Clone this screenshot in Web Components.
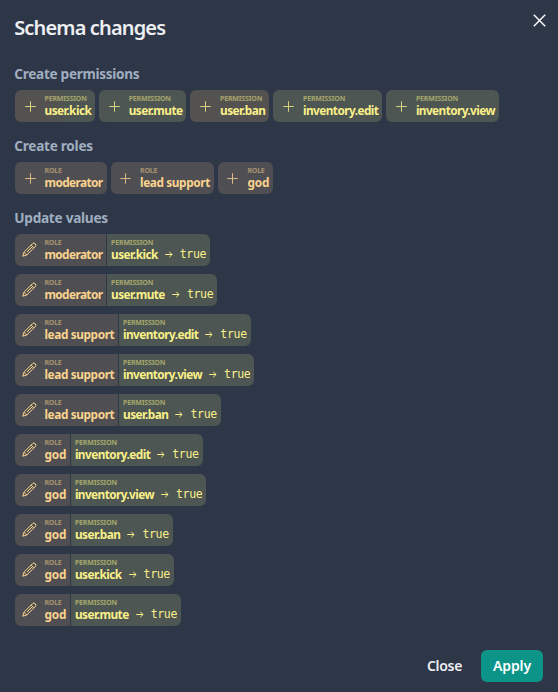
<!DOCTYPE html>
<html lang="en">
<head>
<meta charset="utf-8">
<title>Schema changes</title>
<style>
  body { margin: 0; background: #2d3748; font-family: "Noto Sans", "Open Sans", sans-serif; }
</style>
</head>
<body>
<schema-dialog></schema-dialog>
<script>
// Text whose letters are spaced so that it fills the given width.
class FitText extends HTMLElement {
  constructor() {
    super();
    this.attachShadow({ mode: 'open' }).innerHTML = `
      <style>:host{display:block;white-space:nowrap}span{display:inline-block}</style><span></span>`;
  }
  connectedCallback() {
    const s = this.shadowRoot.querySelector('span');
    const text = this.getAttribute('text');
    const width = +this.getAttribute('width');
    s.textContent = text;
    this.style.width = width + 'px';
    const natural = s.getBoundingClientRect().width;
    s.style.letterSpacing = (width - natural) / text.length + 'px';
  }
}
customElements.define('fit-text', FitText);

class UiIcon extends HTMLElement {
  connectedCallback() {
    const icons = {
      plus: '<path d="M7.5 2.2v10.6M2.2 7.5h10.6"/>',
      pencil: '<path d="M.8 14.2 2 10.2 10.6 1.6Q11.9.4 13.2 1.7Q14.6 3.1 13.4 4.4L4.8 13ZM2 10.2 4.8 13M9.1 3.1 11.9 5.9M10.5 4.5 5 10"/>',
      arrow: '<path d="M3.3 7.5h6.7M7.3 4.8 10 7.5 7.3 10.2"/>',
      cross: '<path stroke-width="1.4" d="M1.8 1.8 13.2 13.2M13.2 1.8 1.8 13.2"/>'
    };
    this.attachShadow({ mode: 'open' }).innerHTML = `
      <style>:host{display:block;width:15px;height:15px;flex:none}svg{display:block}</style>
      <svg width="15" height="15" viewBox="0 0 15 15" fill="none" stroke="currentColor" stroke-width="1" stroke-linejoin="round">${icons[this.getAttribute('name')]}</svg>`;
  }
}
customElements.define('ui-icon', UiIcon);

const WIDTHS = {
  'user.kick': 46.7, 'user.mute': 53.8, 'user.ban': 45.5, 'inventory.edit': 75.4,
  'inventory.view': 79.1, 'moderator': 58, 'lead support': 69.9, 'god': 21.8
};

// Small caption above a bold name, tinted by kind (role or permission).
class NameLabel extends HTMLElement {
  connectedCallback() {
    const kind = this.getAttribute('kind'), name = this.getAttribute('name');
    this.attachShadow({ mode: 'open' }).innerHTML = `
      <style>
        :host{display:block;height:32px}
        .kind{font-size:7px;font-weight:700;line-height:9px;padding-top:4px;opacity:.5}
        .name{font-size:11.8px;font-weight:700;line-height:14.5px}
      </style>
      <fit-text class="kind" text="${kind.toUpperCase()}" width="${kind === 'role' ? 17.2 : 42.2}"></fit-text>
      <fit-text class="name" text="${name}" width="${WIDTHS[name]}"></fit-text>`;
  }
}
customElements.define('name-label', NameLabel);

class CreateChip extends HTMLElement {
  connectedCallback() {
    const kind = this.getAttribute('kind');
    this.attachShadow({ mode: 'open' }).innerHTML = `
      <style>
        :host{display:flex;box-sizing:border-box;height:32px;border-radius:6px;padding:0 4px 0 7.5px;gap:7px;
          color:${kind === 'role' ? '#fbd38d' : '#faf089'};background:var(--chip, ${kind === 'role' ? '#4f4f53' : '#4d5652'})}
        ui-icon{margin-top:8.5px;opacity:.8}
      </style>
      <ui-icon name="plus"></ui-icon><name-label kind="${kind}" name="${this.getAttribute('name')}"></name-label>`;
  }
}
customElements.define('create-chip', CreateChip);

class UpdateRow extends HTMLElement {
  connectedCallback() {
    this.attachShadow({ mode: 'open' }).innerHTML = `
      <style>
        :host{display:flex;gap:1px;width:max-content;height:32px;border-radius:6px;overflow:hidden}
        div{display:flex;padding-right:4px}
        .role{background:#4f4f53;color:#fbd38d;padding:0 3.7px 0 7.4px;gap:7px}
        .role ui-icon{margin-top:8px}
        .perm{background:#4d5652;color:#faf089;padding-left:4px}
        .perm ui-icon{margin:13px 3px 0 4px}
        .value{font:11.5px/16px "DejaVu Sans Mono",monospace;margin-top:12px}
      </style>
      <div class="role"><ui-icon name="pencil"></ui-icon><name-label kind="role" name="${this.getAttribute('role-name')}"></name-label></div>
      <div class="perm"><name-label kind="permission" name="${this.getAttribute('permission')}"></name-label>
        <ui-icon name="arrow"></ui-icon><fit-text class="value" text="true" width="26.4"></fit-text></div>`;
  }
}
customElements.define('update-row', UpdateRow);

class ChangeSection extends HTMLElement {
  connectedCallback() {
    this.attachShadow({ mode: 'open' }).innerHTML = `
      <style>
        :host{display:block;margin-bottom:12px}
        h2{margin:0 0 4px -.7px;height:24px;line-height:24px;font-size:13.6px;font-weight:700;color:#a0aec0;display:flex;align-items:center}
        .items{display:flex;gap:4px}
        :host([stacked]) .items{flex-direction:column;gap:8px}
      </style>
      <h2><fit-text text="${this.getAttribute('heading')}" width="${this.getAttribute('heading-width')}"></fit-text></h2>
      <div class="items"><slot></slot></div>`;
  }
}
customElements.define('change-section', ChangeSection);

class UiButton extends HTMLElement {
  connectedCallback() {
    this.attachShadow({ mode: 'open' }).innerHTML = `
      <style>
        :host{display:flex}
        button{all:unset;box-sizing:border-box;height:32px;padding:0 12px;border-radius:6px;font-size:14px;font-weight:600;line-height:32px;color:#edeff2}
        :host([primary]) button{background:#0d9488;color:#fff}
      </style>
      <button><fit-text text="${this.getAttribute('label')}" width="${this.getAttribute('text-width')}"></fit-text></button>`;
  }
}
customElements.define('ui-button', UiButton);

class SchemaDialog extends HTMLElement {
  connectedCallback() {
    const perms = ['user.kick', 'user.mute', 'user.ban', 'inventory.edit', 'inventory.view'];
    const roles = ['moderator', 'lead support', 'god'];
    const updates = [
      ['moderator', 'user.kick'], ['moderator', 'user.mute'],
      ['lead support', 'inventory.edit'], ['lead support', 'inventory.view'], ['lead support', 'user.ban'],
      ['god', 'inventory.edit'], ['god', 'inventory.view'], ['god', 'user.ban'], ['god', 'user.kick'], ['god', 'user.mute']
    ];
    this.attachShadow({ mode: 'open' }).innerHTML = `
      <style>
        :host{display:flex;flex-direction:column;box-sizing:border-box;width:558px;height:692px;padding:12px 15px 10px;background:#2d3748}
        header{display:flex;justify-content:space-between;height:50px}
        h1{margin:0 0 0 -.8px;font-size:20px;font-weight:600;line-height:32px;color:#edeff2}
        header ui-icon{color:#fff;margin:.5px -3.5px 0 0}
        footer{display:flex;justify-content:flex-end;gap:7px;margin-top:auto}
        .warm{--chip:#545250}
        .mixed{--chip:linear-gradient(90deg,#545250 45%,#4d5652 65%)}
      </style>
      <header><h1><fit-text text="Schema changes" width="151"></fit-text></h1><ui-icon name="cross"></ui-icon></header>
      <change-section heading="Create permissions" heading-width="125">
        ${perms.map((p, i) => `<create-chip kind="permission" name="${p}" class="${['mixed', '', 'warm'][i] || ''}"></create-chip>`).join('')}
      </change-section>
      <change-section heading="Create roles" heading-width="78.5">
        ${roles.map(r => `<create-chip kind="role" name="${r}"></create-chip>`).join('')}
      </change-section>
      <change-section stacked heading="Update values" heading-width="93.5">
        ${updates.map(([r, p]) => `<update-row role-name="${r}" permission="${p}"></update-row>`).join('')}
      </change-section>
      <footer><ui-button label="Close" text-width="35"></ui-button><ui-button primary label="Apply" text-width="38"></ui-button></footer>`;
  }
}
customElements.define('schema-dialog', SchemaDialog);
</script>
</body>
</html>
